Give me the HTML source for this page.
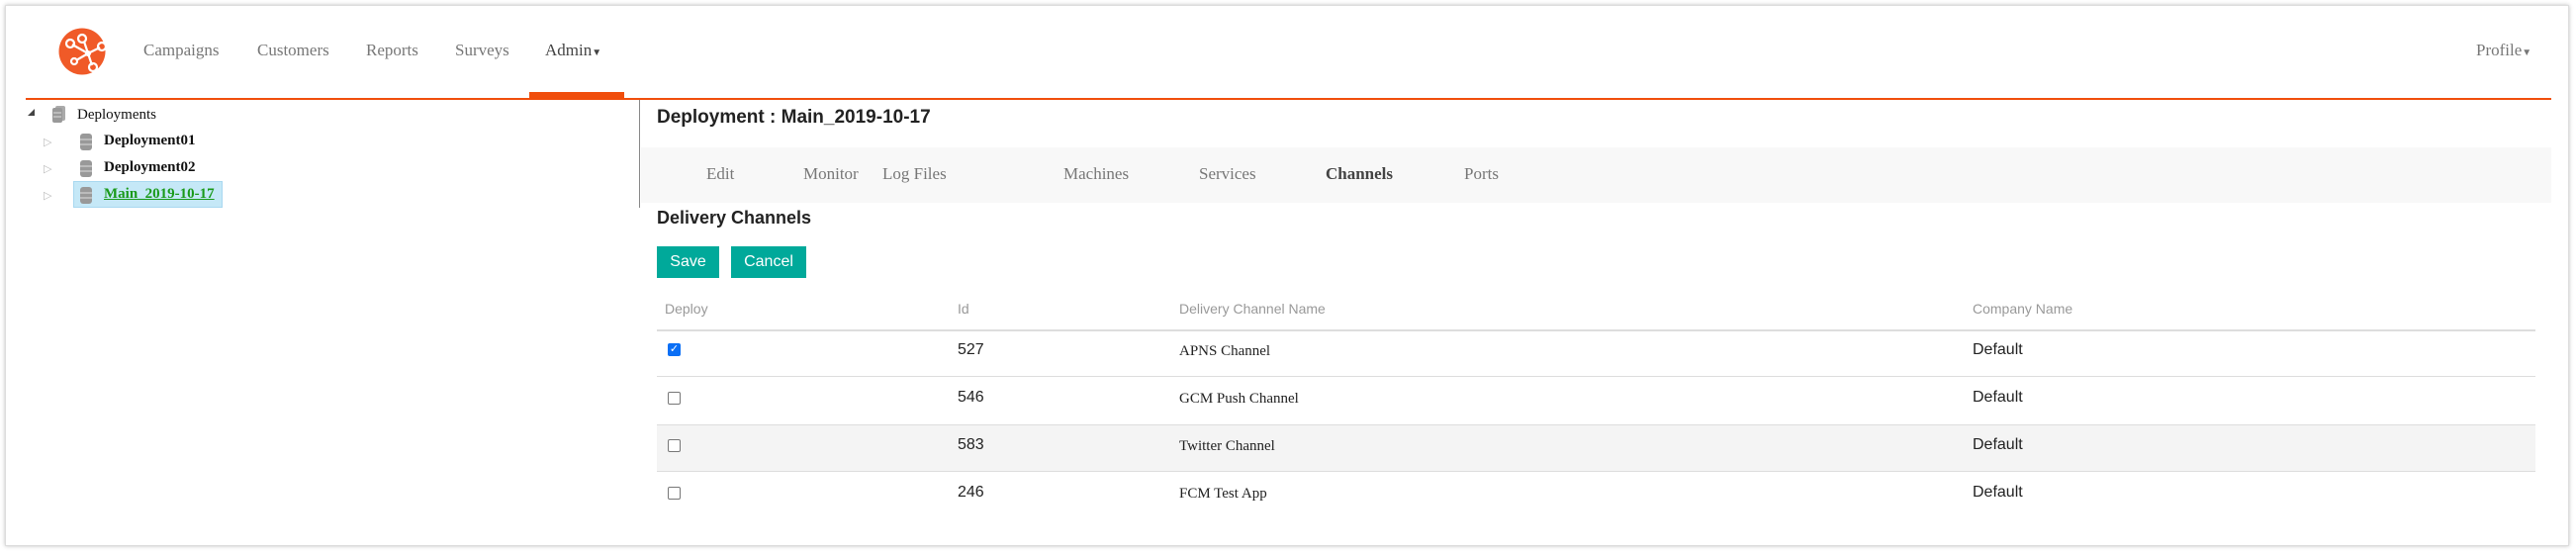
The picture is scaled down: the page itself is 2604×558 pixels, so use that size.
<!DOCTYPE html>
<html><head><meta charset="utf-8"><style>
*{margin:0;padding:0;box-sizing:border-box}
html,body{width:2604px;height:558px;background:#fff;overflow:hidden;font-family:"Liberation Sans",sans-serif}
.frame{position:absolute;left:5px;top:5px;width:2592px;height:547px;border:1px solid #ddd;box-shadow:0 0 4px rgba(0,0,0,.25);background:#fff}
.a{position:absolute;white-space:nowrap}
.nav{font-family:"Liberation Serif",serif;font-size:17px;color:#777;top:41px}
.tab{font-family:"Liberation Serif",serif;font-size:17px;color:#777;top:166px}
.th{font-size:14px;color:#999;top:304px}
.cell{font-size:16px;color:#222}
.serif{font-family:"Liberation Serif",serif;font-size:15px}
.cb{position:absolute;left:675px;width:13px;height:13px;border:1px solid #777;border-radius:2px;background:#fff}
.tree{font-family:"Liberation Serif",serif;font-size:15px;color:#111}
.db{position:absolute;width:14px;height:17px}
.tri{position:absolute;width:0;height:0}
</style></head><body>
<div class="frame"></div>

<svg class="a" style="left:59px;top:28px" width="48" height="48" viewBox="0 0 48 48">
<circle cx="24" cy="24" r="23.5" fill="#f05a28"/>
<g stroke="#fff" stroke-width="2.2" fill="none">
<line x1="14" y1="17" x2="30" y2="26"/><line x1="26" y1="14" x2="30" y2="26"/><line x1="30" y1="26" x2="42" y2="20"/><line x1="30" y1="26" x2="34" y2="38"/><line x1="30" y1="26" x2="18" y2="33"/>
<circle cx="12" cy="16" r="4"/><circle cx="24" cy="11" r="4"/><circle cx="16" cy="34" r="3"/><circle cx="35" cy="40" r="4"/><circle cx="44" cy="19" r="4"/>
</g><circle cx="30" cy="26" r="3" fill="#fff"/></svg>

<div class="a nav" style="left:145px">Campaigns</div>
<div class="a nav" style="left:260px">Customers</div>
<div class="a nav" style="left:370px">Reports</div>
<div class="a nav" style="left:460px">Surveys</div>
<div class="a nav" style="left:551px;color:#444">Admin<span style="font-size:10px">▼</span></div>
<div class="a nav" style="left:2503px">Profile<span style="font-size:10px">▼</span></div>
<div class="a" style="left:535px;top:93px;width:96px;height:7px;background:#f04e0c"></div>
<div class="a" style="left:26px;top:99px;width:2553px;height:2px;background:#f04e0c"></div>

<div class="tri" style="left:28px;top:110px;border-left:7px solid transparent;border-bottom:7px solid #444"></div>
<svg class="db" style="left:53px;top:107px" viewBox="0 0 14 17"><rect x="3" y="0" width="10" height="15" rx="2" fill="#aaa"/><rect x="0" y="2" width="10" height="15" rx="2" fill="#999"/><path d="M1 7h8M1 11h8" stroke="#ddd"/></svg>
<div class="a tree" style="left:78px;top:108px">Deployments</div>
<div class="a tree" style="left:44px;top:137px;color:#bbb;font-size:11px">▷</div>
<svg class="db" style="left:80px;top:135px" viewBox="0 0 14 17"><rect x="1" y="0" width="12" height="17" rx="3" fill="#999"/><path d="M1 6h12M1 11h12" stroke="#ddd"/></svg>
<div class="a tree" style="left:105px;top:134px;font-weight:bold">Deployment01</div>
<div class="a tree" style="left:44px;top:164px;color:#bbb;font-size:11px">▷</div>
<svg class="db" style="left:80px;top:162px" viewBox="0 0 14 17"><rect x="1" y="0" width="12" height="17" rx="3" fill="#999"/><path d="M1 6h12M1 11h12" stroke="#ddd"/></svg>
<div class="a tree" style="left:105px;top:161px;font-weight:bold">Deployment02</div>
<div class="a" style="left:74px;top:183px;width:151px;height:27px;background:#c5e8f7;border:1px solid #a8d8f0"></div>
<div class="a tree" style="left:44px;top:191px;color:#bbb;font-size:11px">▷</div>
<svg class="db" style="left:80px;top:189px" viewBox="0 0 14 17"><rect x="1" y="0" width="12" height="17" rx="3" fill="#999"/><path d="M1 6h12M1 11h12" stroke="#ddd"/></svg>
<div class="a tree" style="left:105px;top:188px;font-weight:bold;color:#1a9a1a;text-decoration:underline">Main_2019-10-17</div>

<div class="a" style="left:646px;top:101px;width:1px;height:109px;background:#888"></div>

<div class="a" style="left:664px;top:108px;font-size:19px;font-weight:bold;color:#222">Deployment : Main_2019-10-17</div>
<div class="a" style="left:648px;top:149px;width:1931px;height:56px;background:#f8f8f8"></div>
<div class="a tab" style="left:714px">Edit</div>
<div class="a tab" style="left:812px">Monitor</div>
<div class="a tab" style="left:892px">Log Files</div>
<div class="a tab" style="left:1075px">Machines</div>
<div class="a tab" style="left:1212px">Services</div>
<div class="a tab" style="left:1340px;font-weight:bold;color:#444">Channels</div>
<div class="a tab" style="left:1480px">Ports</div>

<div class="a" style="left:664px;top:210px;font-size:18px;font-weight:bold;color:#222">Delivery Channels</div>
<div class="a" style="left:664px;top:249px;width:63px;height:32px;background:#00a99a;color:#fff;font-size:16px;text-align:center;line-height:32px">Save</div>
<div class="a" style="left:739px;top:249px;width:76px;height:32px;background:#00a99a;color:#fff;font-size:16px;text-align:center;line-height:32px">Cancel</div>

<div class="a th" style="left:672px">Deploy</div>
<div class="a th" style="left:968px">Id</div>
<div class="a th" style="left:1192px">Delivery Channel Name</div>
<div class="a th" style="left:1994px">Company Name</div>
<div class="a" style="left:664px;top:333px;width:1899px;height:2px;background:#ddd"></div>
<div class="a" style="left:664px;top:380px;width:1899px;height:1px;background:#ddd"></div>
<div class="a" style="left:664px;top:429px;width:1899px;height:48px;background:#f4f4f4;border-top:1px solid #ddd;border-bottom:1px solid #ddd"></div>

<div class="a" style="left:675px;top:347px;width:13px;height:13px;border-radius:2px;background:#0b6ff5;color:#fff;font-size:11px;line-height:13px;text-align:center">✓</div>
<div class="cb" style="top:396px"></div>
<div class="cb" style="top:444px"></div>
<div class="cb" style="top:492px"></div>

<div class="a cell" style="left:968px;top:345px">527</div>
<div class="a cell" style="left:968px;top:393px">546</div>
<div class="a cell" style="left:968px;top:441px">583</div>
<div class="a cell" style="left:968px;top:489px">246</div>
<div class="a cell serif" style="left:1192px;top:347px">APNS Channel</div>
<div class="a cell serif" style="left:1192px;top:395px">GCM Push Channel</div>
<div class="a cell serif" style="left:1192px;top:443px">Twitter Channel</div>
<div class="a cell serif" style="left:1192px;top:491px">FCM Test App</div>
<div class="a cell" style="left:1994px;top:345px">Default</div>
<div class="a cell" style="left:1994px;top:393px">Default</div>
<div class="a cell" style="left:1994px;top:441px">Default</div>
<div class="a cell" style="left:1994px;top:489px">Default</div>
</body></html>
